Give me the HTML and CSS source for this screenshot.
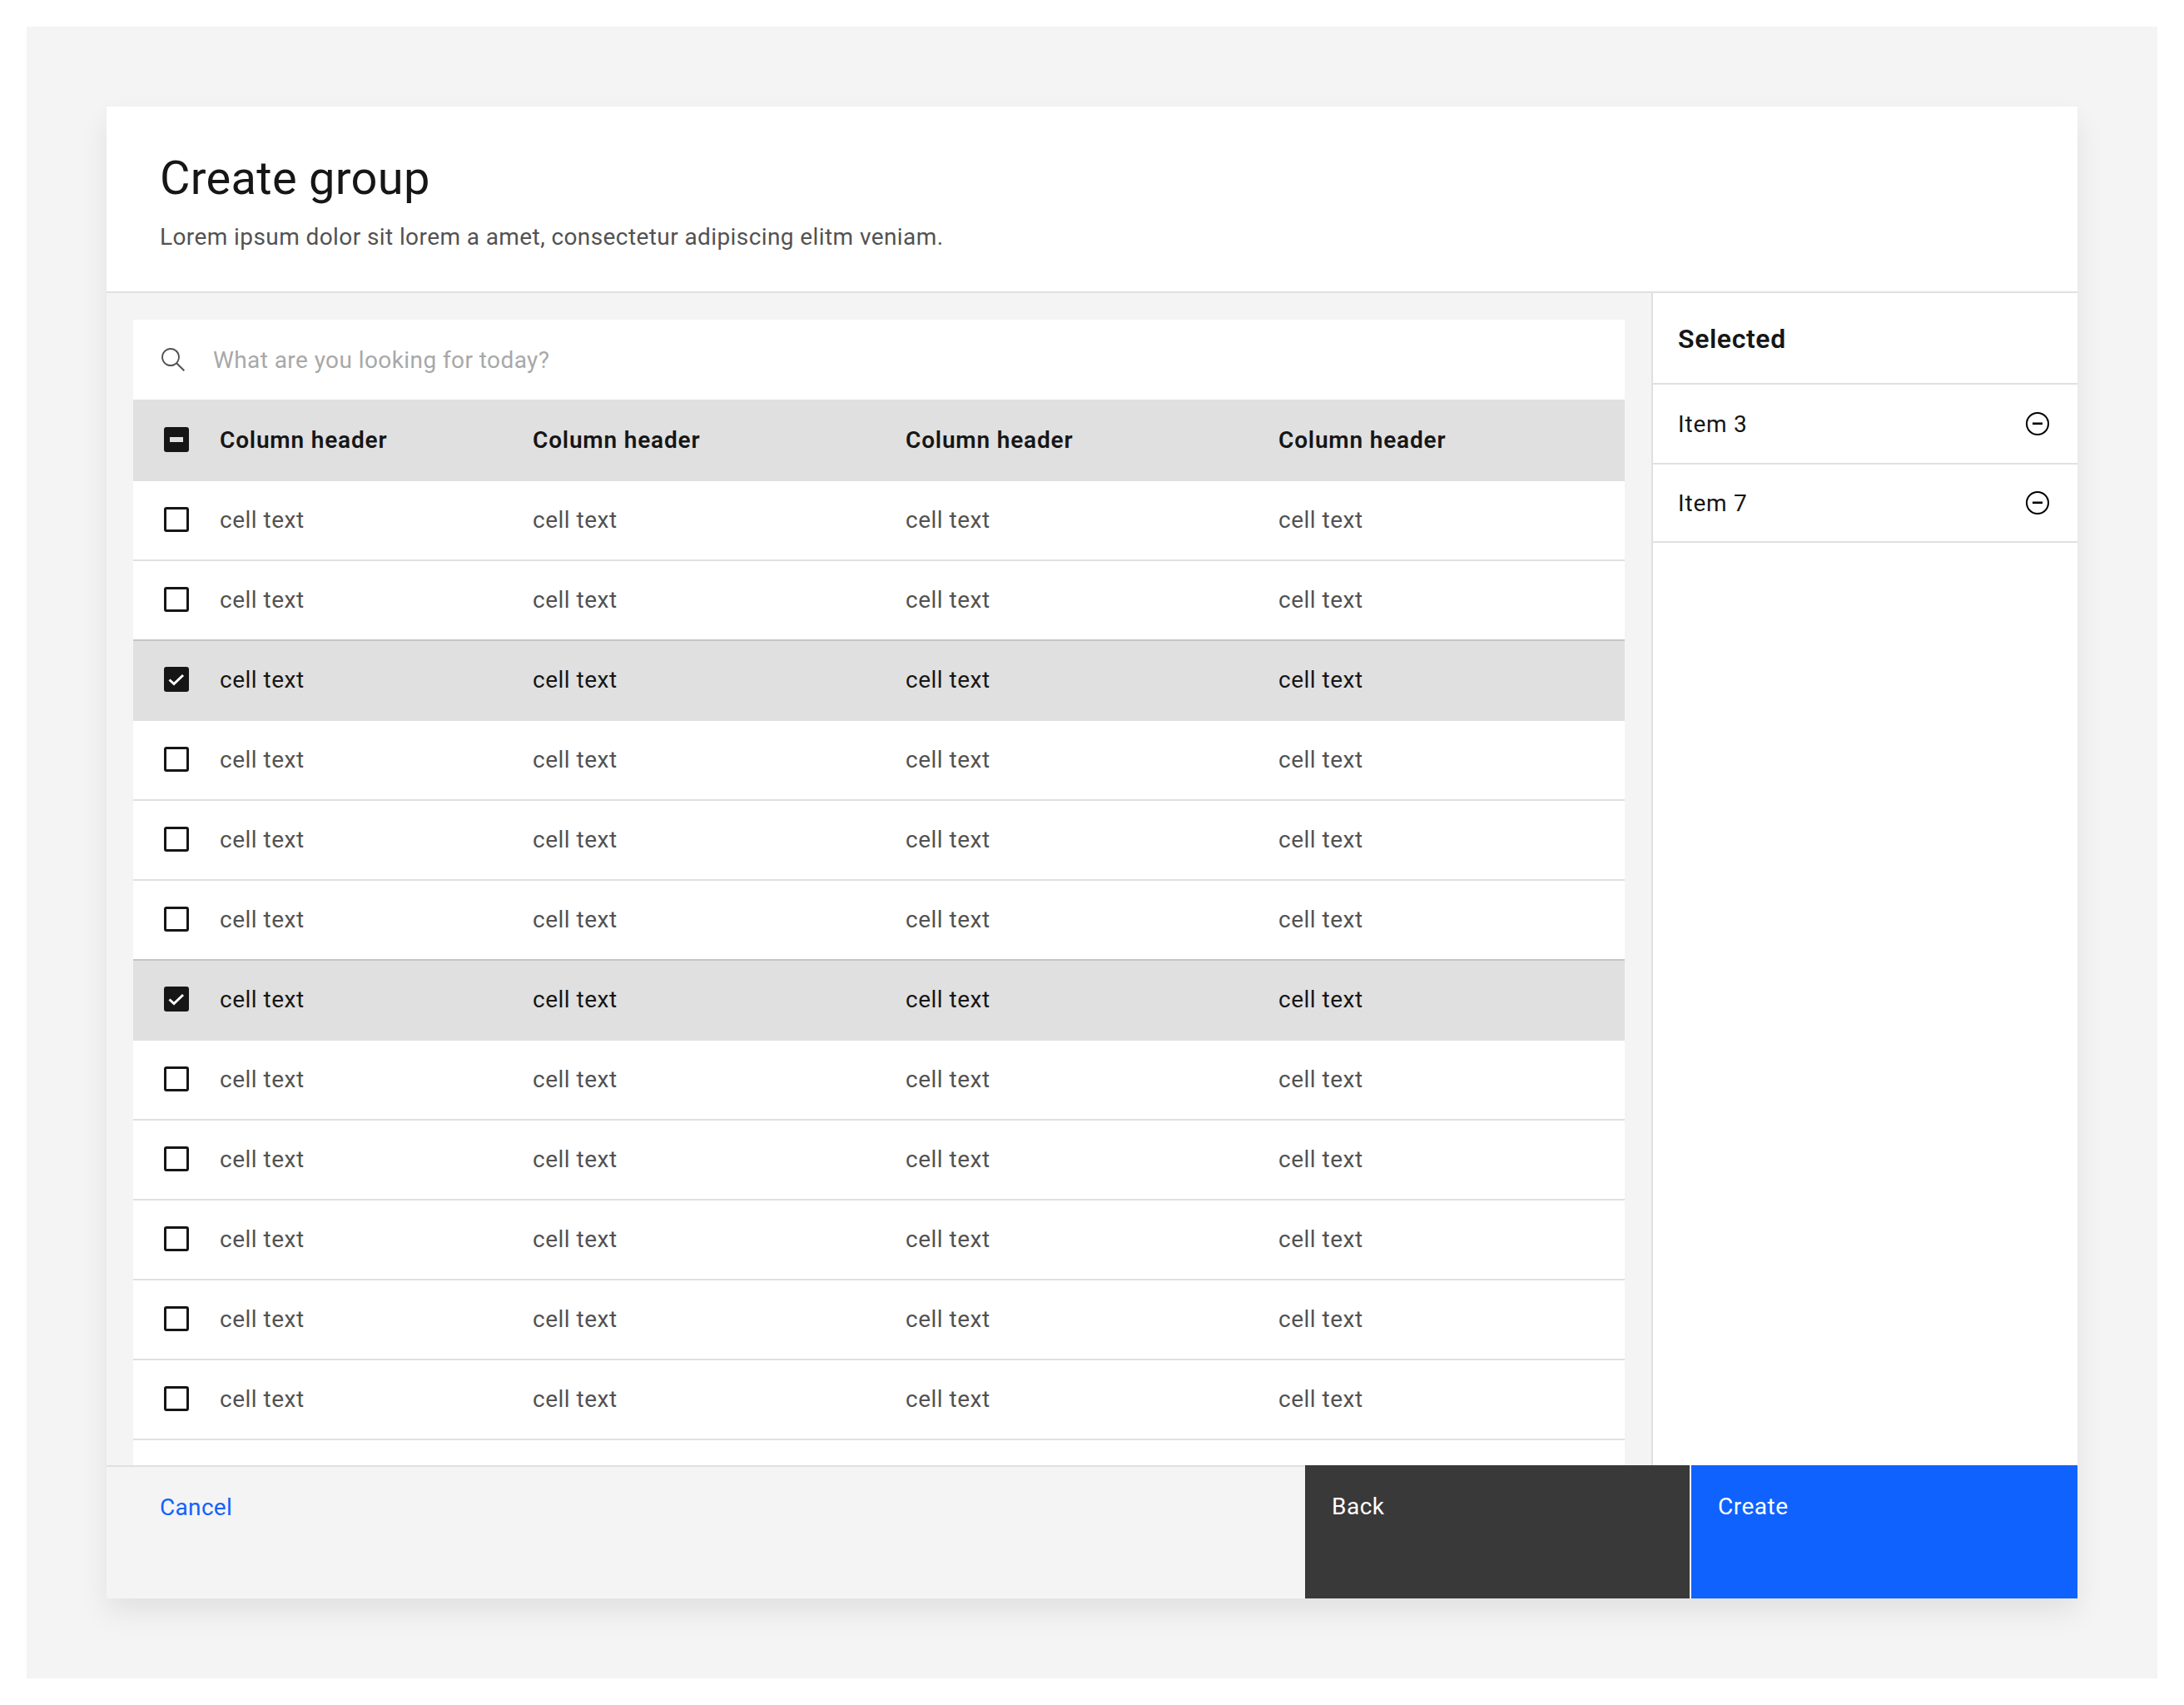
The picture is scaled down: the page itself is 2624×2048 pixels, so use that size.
FILE: index.html
```html
<!DOCTYPE html>
<html lang="en">
<head>
    <meta charset="UTF-8">
    <meta name="viewport" content="width=device-width, initial-scale=1.0">
    <title>Create group</title>
    <link rel="stylesheet" href="styles.css">
</head>

<body>
    <div class="page">
        <div class="modal">
            <header class="modal-header">
                <h1>Create group</h1>
                <p>Lorem ipsum dolor sit lorem a amet, consectetur adipiscing elitm veniam.</p>
            </header>

            <div class="modal-body">
                <div class="main">
                    <div class="panel">
                        <div class="search">
                            <svg class="search-icon" viewBox="0 0 16 16"><path d="M15,14.3L10.7,10c1.9-2.3,1.6-5.8-0.7-7.7S4.2,0.7,2.3,3S0.7,8.8,3,10.7c2,1.7,5,1.7,7,0l4.3,4.3L15,14.3z M2,6.5C2,4,4,2,6.5,2S11,4,11,6.5S9,11,6.5,11S2,9,2,6.5z"/></svg>
                            <span class="placeholder">What are you looking for today?</span>
                        </div>

                        <div class="row head">
                            <span class="cb on"><svg viewBox="0 0 30 30"><rect x="7" y="12" width="16" height="6" fill="#e0e0e0"/></svg></span>
                            <span>Column header</span><span>Column header</span><span>Column header</span><span>Column header</span>
                        </div>
                        <div class="row"><span class="cb"></span><span>cell text</span><span>cell text</span><span>cell text</span><span>cell text</span></div>
                        <div class="row before-selected"><span class="cb"></span><span>cell text</span><span>cell text</span><span>cell text</span><span>cell text</span></div>
                        <div class="row selected"><span class="cb on"><svg viewBox="0 0 30 30"><polyline points="6.5,15.5 12,20.5 23,10" fill="none" stroke="#fff" stroke-width="3"/></svg></span><span>cell text</span><span>cell text</span><span>cell text</span><span>cell text</span></div>
                        <div class="row"><span class="cb"></span><span>cell text</span><span>cell text</span><span>cell text</span><span>cell text</span></div>
                        <div class="row"><span class="cb"></span><span>cell text</span><span>cell text</span><span>cell text</span><span>cell text</span></div>
                        <div class="row before-selected"><span class="cb"></span><span>cell text</span><span>cell text</span><span>cell text</span><span>cell text</span></div>
                        <div class="row selected"><span class="cb on"><svg viewBox="0 0 30 30"><polyline points="6.5,15.5 12,20.5 23,10" fill="none" stroke="#fff" stroke-width="3"/></svg></span><span>cell text</span><span>cell text</span><span>cell text</span><span>cell text</span></div>
                        <div class="row"><span class="cb"></span><span>cell text</span><span>cell text</span><span>cell text</span><span>cell text</span></div>
                        <div class="row"><span class="cb"></span><span>cell text</span><span>cell text</span><span>cell text</span><span>cell text</span></div>
                        <div class="row"><span class="cb"></span><span>cell text</span><span>cell text</span><span>cell text</span><span>cell text</span></div>
                        <div class="row"><span class="cb"></span><span>cell text</span><span>cell text</span><span>cell text</span><span>cell text</span></div>
                        <div class="row"><span class="cb"></span><span>cell text</span><span>cell text</span><span>cell text</span><span>cell text</span></div>
                    </div>
                </div>

                <aside class="sidebar">
                    <div class="sidebar-title">Selected</div>
                    <div class="item">
                        <span>Item 3</span>
                        <svg class="remove-icon" viewBox="0 0 32 32"><circle cx="16" cy="16" r="13" fill="none" stroke="#000" stroke-width="2"/><rect x="10" y="14.5" width="12" height="2.6" fill="#000"/></svg>
                    </div>
                    <div class="item">
                        <span>Item 7</span>
                        <svg class="remove-icon" viewBox="0 0 32 32"><circle cx="16" cy="16" r="13" fill="none" stroke="#000" stroke-width="2"/><rect x="10" y="14.5" width="12" height="2.6" fill="#000"/></svg>
                    </div>
                </aside>
            </div>

            <footer class="modal-footer">
                <div class="footer-left"><a class="cancel" href="#">Cancel</a></div>
                <div class="btn btn-back">Back</div>
                <div class="btn btn-create">Create</div>
            </footer>
        </div>
    </div>
</body>
</html>
```

FILE: styles.css
```css
html, body {
    margin: 0;
    height: 100%;
    background-color: #ffffff;
}

body {
    font-family: Roboto, "Noto Sans", sans-serif;
    font-size: 28px;
    letter-spacing: 0.5px;
    color: #161616;
    overflow: hidden;
}

.page {
    margin: 32px;
    height: 1984px;
    padding: 96px;
    box-sizing: border-box;
    background-color: #f4f4f4;
}

.modal {
    display: flex;
    flex-direction: column;
    height: 100%;
    background-color: #ffffff;
    box-shadow: 0 16px 32px rgba(0, 0, 0, 0.08);
}

.modal-header {
    height: 224px;
    box-sizing: border-box;
    padding: 50px 64px 0;
    border-bottom: 2px solid #e0e0e0;
}

.modal-header h1 {
    margin: 0;
    font-size: 56px;
    line-height: 72px;
    font-weight: 400;
    letter-spacing: 0.3px;
}

.modal-header p {
    margin: 15px 0 0;
    line-height: 40px;
    letter-spacing: 0.41px;
    color: #525252;
}

.modal-body {
    flex: 1;
    display: flex;
    min-height: 0;
}

.main {
    flex: 1;
    padding: 32px 32px 0;
    background-color: #f4f4f4;
    overflow: hidden;
}

.panel {
    height: 100%;
    background-color: #ffffff;
    overflow: hidden;
}

.search {
    display: flex;
    align-items: center;
    height: 96px;
    padding-left: 32px;
}

.search-icon {
    width: 32px;
    height: 32px;
    margin-right: 32px;
    fill: #525252;
}

.placeholder {
    color: #a8a8a8;
    letter-spacing: 0.42px;
}

.row {
    display: grid;
    grid-template-columns: 104px 376px 448px 448px 1fr;
    align-items: center;
    height: 96px;
    box-sizing: border-box;
    padding-bottom: 2px;
    border-bottom: 2px solid #e0e0e0;
    color: #525252;
}

.row.head {
    height: 98px;
    padding-bottom: 0;
    background-color: #e0e0e0;
    color: #161616;
    font-weight: 600;
    letter-spacing: 0.82px;
}

.row.selected {
    background-color: #e0e0e0;
    color: #161616;
}

.row.before-selected {
    border-bottom-color: #c6c6c6;
}

.cb {
    display: block;
    width: 30px;
    height: 30px;
    margin-left: 37px;
    box-sizing: border-box;
    border: 3px solid #161616;
    border-radius: 3px;
    background-color: #ffffff;
}

.cb.on {
    border: none;
    background-color: #161616;
}

.cb svg {
    display: block;
    width: 30px;
    height: 30px;
}

.sidebar {
    width: 512px;
    box-sizing: border-box;
    border-left: 2px solid #e0e0e0;
    background-color: #ffffff;
}

.sidebar-title {
    display: flex;
    align-items: center;
    height: 110px;
    box-sizing: border-box;
    padding: 2px 0 0 30px;
    border-bottom: 2px solid #e0e0e0;
    font-size: 32px;
    font-weight: 600;
    letter-spacing: 0.6px;
}

.item {
    display: flex;
    align-items: center;
    justify-content: space-between;
    height: 96px;
    box-sizing: border-box;
    padding: 0 32px 0 30px;
    border-bottom: 2px solid #e0e0e0;
    letter-spacing: 0.8px;
}

.item:last-child {
    height: 94px;
}

.remove-icon {
    width: 32px;
    height: 32px;
}

.modal-footer {
    display: flex;
    height: 160px;
    background-color: #f4f4f4;
}

.footer-left {
    flex: 1;
    box-sizing: border-box;
    padding: 31px 64px 0;
    border-top: 2px solid #e0e0e0;
}

.cancel {
    color: #0f62fe;
    text-decoration: none;
    line-height: 36px;
    letter-spacing: 0.32px;
}

.btn {
    box-sizing: border-box;
    padding: 32px 32px 0;
    line-height: 36px;
    color: #ffffff;
}

.btn-back {
    width: 462px;
    background-color: #393939;
}

.btn-create {
    width: 464px;
    margin-left: 2px;
    background-color: #0f62fe;
}
```
